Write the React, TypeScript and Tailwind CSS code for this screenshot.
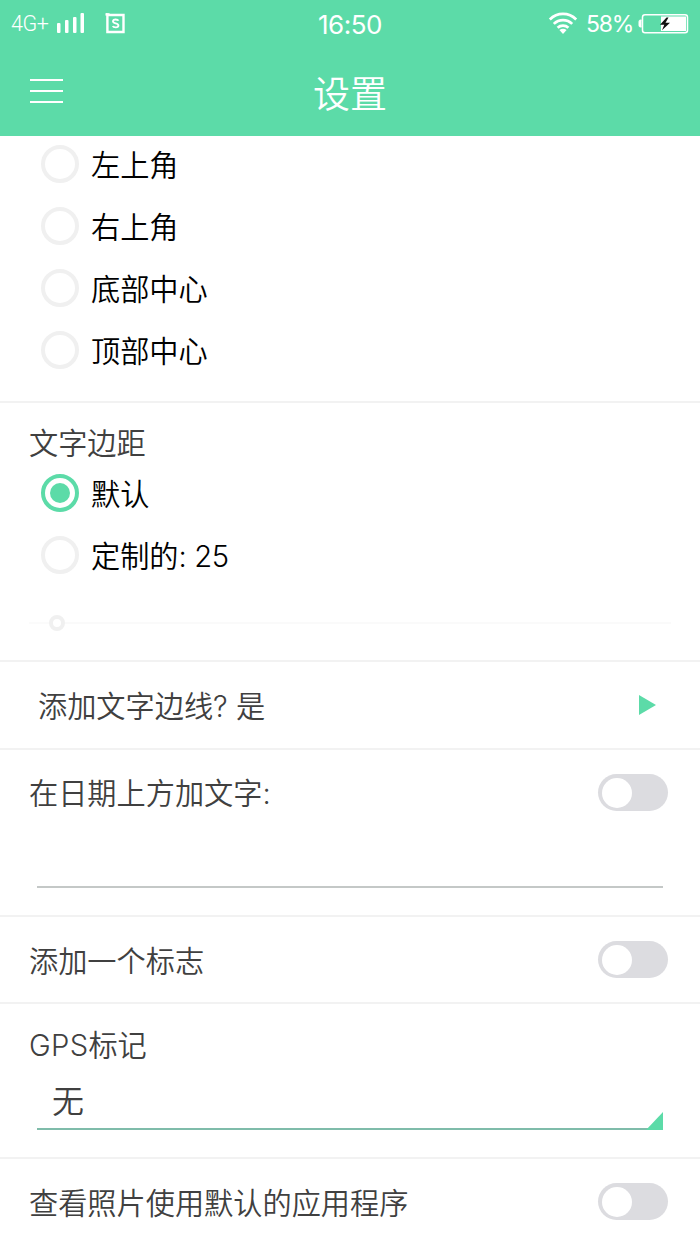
import React from "react";

function Radio({ label, checked = false }: { label: React.ReactNode; checked?: boolean }) {
  return (
    <div className="flex h-[38px] items-center gap-[12px] pl-[41px] text-black">
      <span
        className={
          checked
            ? "flex size-[38px] shrink-0 items-center justify-center rounded-full border-4 border-[#5cdba8]"
            : "size-[38px] shrink-0 rounded-full border-4 border-[#f0f0f0]"
        }
      >
        {checked && <span className="size-5 rounded-full bg-[#5cdba8]" />}
      </span>
      <span className="pt-[4px]">{label}</span>
    </div>
  );
}

function Toggle() {
  return (
    <span className="flex h-[37px] w-[70px] items-center rounded-full bg-[#dcdce0] pl-[3.5px]">
      <span className="size-[30px] rounded-full bg-white" />
    </span>
  );
}

function StatusBar() {
  return (
    <div className="grid h-[47px] grid-cols-3 items-center font-normal text-white">
      <div className="flex items-center pl-[11px]">
        <span className="w-[46px] whitespace-nowrap text-[21.5px] font-[350] leading-none tracking-[-0.4px] [font-family:Roboto,sans-serif]">4G+</span>
        <svg width="28" height="20" viewBox="0 0 28 20" fill="#fff" className="-mt-px">
          <rect x="0" y="10" width="3.5" height="10" rx="1" />
          <rect x="8" y="7" width="3.5" height="13" rx="1" />
          <rect x="16" y="4" width="3.5" height="16" rx="1" />
          <rect x="23.5" y="0" width="3.5" height="20" rx="1" />
        </svg>
        <svg width="21" height="22" viewBox="0 0 21 22" fill="none" stroke="#fff" className="ml-[20px] -mt-px">
          <path d="M2.4 3H18.5V20H2.4Z" strokeWidth="2.4" />
          <path d="M0.5 2.2 4.5 2.6" strokeWidth="2.6" />
          <path d="M13.4 8.7C12.9 7.3 8 6.7 8 9.2c0 2.7 5.4 1.6 5.4 4.3 0 2.6-5 2.2-5.6.5" strokeWidth="1.9" />
        </svg>
      </div>
      <div className="pt-[3px] text-center text-[26px] leading-none tracking-[-0.5px] [font-family:Inter,sans-serif]">16:50</div>
      <div className="flex items-center justify-end pr-[11px]">
        <svg width="30" height="23" viewBox="0 0 30 23" fill="none" stroke="#fff" strokeWidth="2.7">
          <path d="M1.8 7.5C9.2.1 20.8.1 28.2 7.5" />
          <path d="M5.8 11.9C11 6.9 19 6.9 24.2 11.9" />
          <path d="M9.6 15.8C12.6 13 17.4 13 20.4 15.8" />
          <path d="M11.4 18.1Q15 15.5 18.6 18.1L15 22Z" fill="#fff" stroke="none" />
        </svg>
        <span className="ml-[8px] w-[52px] whitespace-nowrap pt-[2px] text-[23px] leading-none tracking-[-1.2px] [font-family:Inter,sans-serif]">58%</span>
        <svg width="51" height="22" viewBox="0 0 51 22">
          <path d="M3.5 7H2.5Q1 7 1 8.5v4Q1 14 2.5 14h1" fill="#fff" stroke="#fff" />
          <rect x="4.5" y="1.7" width="45" height="18" rx="2.5" fill="none" stroke="#fff" strokeWidth="1.5" />
          <rect x="23" y="3.5" width="25" height="14.5" fill="#fff" />
          <path d="M28.5 4.5 22 11.7h4.3L24 17.2l8-7.4h-4.5l3-5.3Z" fill="#111" />
        </svg>
      </div>
    </div>
  );
}

export default function App() {
  return (
    <div className="flex h-[1244px] w-[700px] flex-col overflow-hidden bg-white text-[29.2px] font-[350] leading-[36px] text-[#404040] [font-family:Inter,'Noto_Sans_CJK_SC_DemiLight','Noto_Sans_CJK_SC',sans-serif]">
      <header className="h-[136px] shrink-0 bg-[#5cdba8]">
        <StatusBar />
        <div className="grid h-[89px] grid-cols-3 items-center text-white">
          <div className="flex w-[33px] flex-col gap-[9px] justify-self-start ml-[30px] -mt-px">
            <span className="h-[2px] bg-white" />
            <span className="h-[2px] bg-white" />
            <span className="h-[2px] bg-white" />
          </div>
          <h1 className="pt-[6px] text-center text-[37px]">设置</h1>
        </div>
      </header>

      <section className="flex h-[267px] shrink-0 flex-col gap-[24.1px] border-b-2 border-[#f2f2f2] pt-[9px]">
        <Radio label="左上角" />
        <Radio label="右上角" />
        <Radio label="底部中心" />
        <Radio label="顶部中心" />
      </section>

      <section className="flex h-[259px] shrink-0 flex-col border-b-2 border-[#f2f2f2] pt-[23px]">
        <h2 className="mb-[12px] pl-[29px]">文字边距</h2>
        <div className="flex flex-col gap-[24.3px]">
          <Radio label="默认" checked />
          <Radio label={<>定制的<span className="tracking-[-0.4px]">: 25</span></>} />
        </div>
        <div className="ml-[29px] mt-[41px] flex h-4 w-[642px] items-center">
          <span className="h-[2px] w-[20px] bg-[#fbfbfb]" />
          <span className="size-4 rounded-full border-4 border-[#f0f0f0]" />
          <span className="h-[2px] flex-1 bg-[#fafafa]" />
        </div>
      </section>

      <section className="flex h-[88px] shrink-0 items-center justify-between border-b-2 border-[#f2f2f2] pl-[38px] pr-[44px]">
        <span className="pt-[4px]">添加文字边线? 是</span>
        <svg width="17" height="20" viewBox="0 0 17 20" fill="#5cdba8"><path d="M0 0 17 10 0 20Z" /></svg>
      </section>

      <section className="h-[167px] shrink-0 border-b-2 border-[#f2f2f2] pt-[24px]">
        <div className="flex h-[37px] items-center justify-between pl-[29px] pr-[32px]">
          <span className="pt-[3px]">在日期上方加文字:</span>
          <Toggle />
        </div>
        <div className="mx-[37px] h-[77px] border-b-2 border-[#c4c8c7]" />
      </section>

      <section className="flex h-[87px] shrink-0 items-center justify-between border-b-2 border-[#f2f2f2] pl-[29px] pr-[32px]">
        <span className="pt-[4px]">添加一个标志</span>
        <Toggle />
      </section>

      <section className="h-[155px] shrink-0 border-b-2 border-[#f2f2f2] pt-[24px]">
        <h2 className="pl-[29px]"><span className="tracking-[0.3px]">GPS</span>标记</h2>
        <div className="mx-[37px] mt-[15px] flex h-[51px] items-end justify-between border-b-2 border-[#7fbcaa] pl-[15px]">
          <span className="pb-[8px] text-[32px]">无</span>
          <svg width="17" height="18" viewBox="0 0 17 18" fill="#5cdba8" className="-mb-[2px]"><path d="M17 0V18H0Z" /></svg>
        </div>
      </section>

      <section className="flex h-[85px] shrink-0 items-center justify-between pl-[29px] pr-[32px]">
        <span className="pt-[4px]">查看照片使用默认的应用程序</span>
        <Toggle />
      </section>
    </div>
  );
}
